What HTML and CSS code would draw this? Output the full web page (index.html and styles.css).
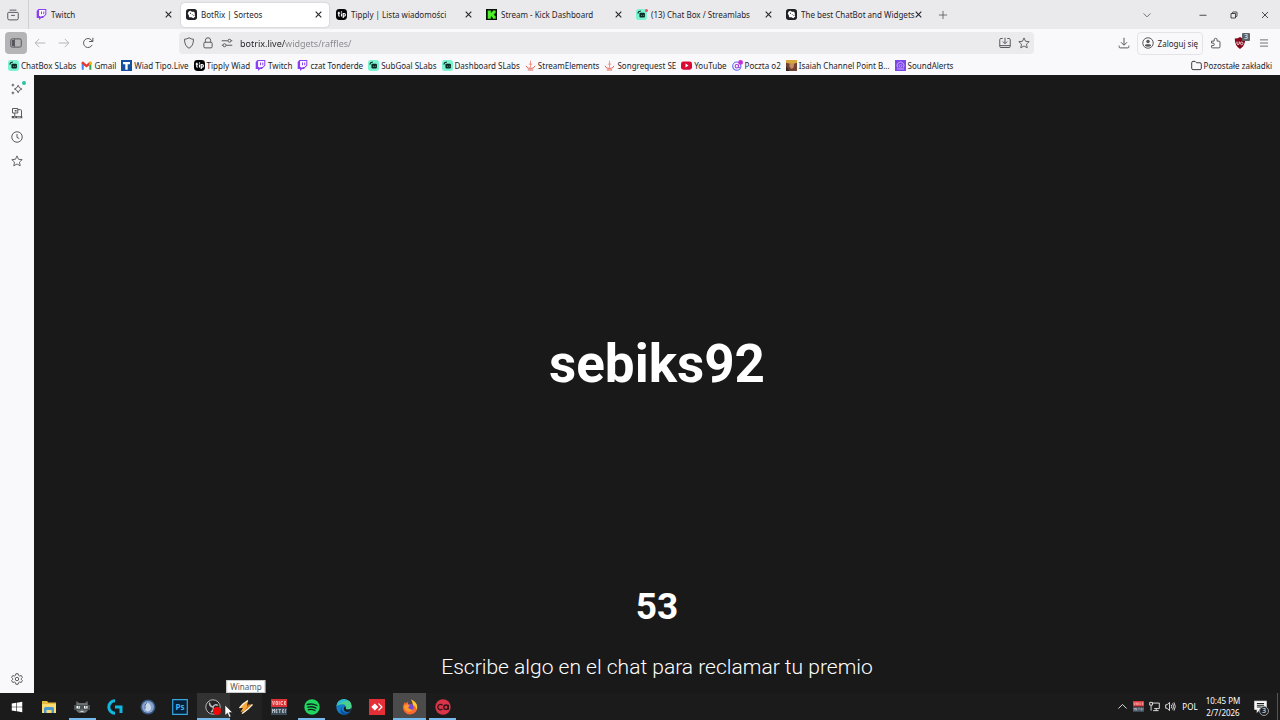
FILE: index.html
```html
<!DOCTYPE html>
<html lang="pl">
<head>
  <meta charset="UTF-8">
  <meta name="viewport" content="width=device-width, initial-scale=1">
  <title>BotRix | Sorteos</title>
  <link rel="stylesheet" href="styles.css">
</head>
<body>
<!-- shared icons -->
<svg class="sprite" aria-hidden="true">
  <symbol id="i-twitch" viewBox="0 0 16 16">
    <path d="M3.500 0 1 3v10h3.500v3l3-3H10l5-5V0z" fill="#8a3ff0"/>
    <path d="M4.500 1.500h9v6L11 10H8.500L6.500 12v-2h-2z" fill="#fff"/>
    <path d="M8 3.800v3.700M11.300 3.800v3.700" stroke="#8a3ff0" stroke-width="1.500"/>
  </symbol>
  <symbol id="i-botrix" viewBox="0 0 16 16">
    <rect width="16" height="16" rx="4" fill="#202126"/>
    <path d="M4 3.500 6.500 2.500 8.500 4h3.500l1 3.500-.5 1.500 1 2-3 2.500L8 12 4.500 12 4 9 2.500 6.500z" fill="#fff"/>
    <path d="m5.800 5.500 1.700 1.700M9.500 8l1.500 1.500" stroke="#202126" stroke-width="1.400"/>
  </symbol>
  <symbol id="i-tip" viewBox="0 0 16 16">
    <rect width="16" height="16" rx="5" fill="#050505"/>
    <path d="M4 4v5.500q0 1 1.500 1M2.500 6h3.500M8 6.500V11M10.500 13V6.500h1.200a2 2 0 0 1 0 4h-1.200" stroke="#fff" stroke-width="1.700" fill="none"/>
    <circle cx="8" cy="4.300" r="1" fill="#fff"/>
  </symbol>
  <symbol id="i-kick" viewBox="0 0 16 16">
    <path d="M0 0h16v16H0z" fill="#061006"/>
    <path d="M2.500 2H7v3h1.500V3.500H10V2h4v4h-1.500v1.500H11v1h1.500V10H14v4h-4v-1.500H8.500V11H7v3H2.500z" fill="#4cf02b"/>
  </symbol>
  <symbol id="i-slabs" viewBox="0 0 16 16">
    <rect width="16" height="16" rx="4" fill="#7cf3d0"/>
    <path d="M2.500 6.500 4 4l3-1" fill="none" stroke="#092b24" stroke-width="1.600"/>
    <path d="M5 7q0-1.500 1.500-1.500h5Q13 5.500 13 7v4q0 1.500-1.500 1.500h-5Q5 12.500 5 11z" fill="#092b24"/>
    <path d="M8 8.500v1.300M10.700 8.500v1.300" stroke="#7cf3d0"/>
  </symbol>
  <symbol id="i-gmail" viewBox="0 0 16 16">
    <path d="M1 3.500V14h3V7z" fill="#4285f4"/>
    <path d="M15 3.500V14h-3V7z" fill="#34a853"/>
    <path d="m1 3 2-1 5 4.500L13 2l2 1v2.500L8 11 1 5.500z" fill="#e5392e"/>
    <path d="M12 3.500 14 2l1 1.500v2.300L12 8z" fill="#fbbc04"/>
  </symbol>
  <symbol id="i-tipo" viewBox="0 0 16 16">
    <path d="M0 0h16v16H0z" fill="#14509d"/>
    <path d="M3 3h10v3H9.700v8H6.300V6H3z" fill="#fff"/>
  </symbol>
  <symbol id="i-se" viewBox="0 0 16 16">
    <path d="M8 1v10M5.500 6h5" stroke="#ef8c80" stroke-width="1.300"/>
    <path d="M1.500 8.500q1 3 4 3.500h5q3-.5 4-3.500M4 14.500h8" fill="none" stroke="#e5594c" stroke-width="1.400"/>
  </symbol>
  <symbol id="i-youtube" viewBox="0 0 16 16">
    <rect y="2" width="16" height="12" rx="3.500" fill="#d90a35"/>
    <path d="m6.500 5.200 4.500 2.800-4.500 2.800z" fill="#fff"/>
  </symbol>
  <symbol id="i-o2" viewBox="0 0 16 16">
    <circle cx="7" cy="9" r="6" fill="none" stroke="#5c6df0" stroke-width="1.600"/>
    <circle cx="7" cy="9" r="2.500" fill="none" stroke="#a43ce0" stroke-width="1.600"/>
    <path d="M9.500 7v3q.5 2 2.500 1" fill="none" stroke="#a43ce0" stroke-width="1.500"/>
    <circle cx="12.500" cy="3.500" r="3.500" fill="#c42fd6"/>
  </symbol>
  <symbol id="i-isaiah" viewBox="0 0 16 16">
    <path d="M0 0h16v16H0z" fill="#70422f"/>
    <path d="M0 0h16v4L9 6 0 4z" fill="#d6a740"/>
    <path d="M5 5h7l-1 6-3 2-3-4z" fill="#c48c65"/>
    <path d="M0 9 5 16H0z" fill="#2c2421"/>
  </symbol>
  <symbol id="i-alerts" viewBox="0 0 16 16">
    <path d="M0 0h16v16H0z" fill="#7c46e8"/>
    <path d="M4 11a5 5 0 1 1 8 0M3 13h10" fill="none" stroke="#cfb6ff" stroke-width="1.300"/>
    <circle cx="8" cy="8.500" r="2" fill="none" stroke="#cfb6ff"/>
  </symbol>
  <symbol id="i-close" viewBox="3 3 10 10"><path d="m4 4 8 8m0-8-8 8" fill="none" stroke="currentColor" stroke-width="1.600"/></symbol>
  <symbol id="i-star" viewBox="0 0 16 16"><path d="m8 1.200 2 4.500 4.900.5-3.600 3.300 1 4.900L8 12l-4.300 2.400 1-4.900L1.100 6.200 6 5.700z" fill="none" stroke="currentColor" stroke-width="1.200" stroke-linejoin="round"/></symbol>
  <symbol id="i-vm" viewBox="0 0 16 16">
    <path d="M0 0h16v8H0z" fill="#dd3338"/><path d="M0 8.500h16V16H0z" fill="#3b4855"/>
    <path d="m1.500 2 1 4 1-4M5 2.500h1.500v3H5zM8.200 2v4M12 2.500H10v3h2M15 2.500h-1.500v3H15M13.500 4H15" fill="none" stroke="#ffd4d2" stroke-width=".8"/>
    <path d="M1.500 14v-4l1 2 1-2v4M6.500 10.500H5v3h1.500M5 12h1.500M7.500 10.500h2.500M8.700 10.500V14M13 10.500h-1.500v3H13M11.500 12H13M14.300 14v-3.500h1" fill="none" stroke="#c6d0d8" stroke-width=".8"/>
  </symbol>
</svg>

<header class="browser">
  <!-- tab strip -->
  <div class="tabstrip">
    <button class="tab-overview" aria-label="Firefox View">
      <svg class="icon" viewBox="0 0 16 16"><path d="M3.500 1.500h9M2 4.500h12q1 0 1 1v7q0 2-2 2H3q-2 0-2-2v-7q0-1 1-1zM5.500 8.500h5" class="line"/></svg>
    </button>
    <nav class="tabs">
      <div class="tab"><svg class="fav"><use href="#i-twitch"/></svg><a href="#">Twitch</a><button aria-label="Zamknij"><svg><use href="#i-close"/></svg></button></div>
      <div class="tab active"><svg class="fav"><use href="#i-botrix"/></svg><a href="#">BotRix | Sorteos</a><button aria-label="Zamknij"><svg><use href="#i-close"/></svg></button></div>
      <div class="tab"><svg class="fav"><use href="#i-tip"/></svg><a href="#">Tipply | Lista wiadomości</a><button aria-label="Zamknij"><svg><use href="#i-close"/></svg></button></div>
      <div class="tab"><svg class="fav"><use href="#i-kick"/></svg><a href="#">Stream - Kick Dashboard</a><button aria-label="Zamknij"><svg><use href="#i-close"/></svg></button></div>
      <div class="tab notify"><svg class="fav"><use href="#i-slabs"/></svg><a href="#">(13) Chat Box / Streamlabs</a><button aria-label="Zamknij"><svg><use href="#i-close"/></svg></button></div>
      <div class="tab"><svg class="fav"><use href="#i-botrix"/></svg><a href="#">The best ChatBot and Widgets</a><button aria-label="Zamknij"><svg><use href="#i-close"/></svg></button></div>
    </nav>
    <button class="new-tab" aria-label="Nowa karta"><svg class="icon small" viewBox="0 0 16 16"><path d="M8 1.500v13M1.500 8h13" class="line"/></svg></button>
    <button class="all-tabs" aria-label="Lista kart"><svg class="icon small" viewBox="0 0 16 16"><path d="m2.500 5.500 5.500 5.500 5.500-5.500" class="line"/></svg></button>
    <div class="window-buttons">
      <button aria-label="Minimalizuj"><svg viewBox="0 0 16 16"><path d="M1 8.500h14"/></svg></button>
      <button aria-label="Przywróć"><svg viewBox="0 0 16 16"><path d="M2 5h9v9H2zM5 5V3q0-1 1-1h7q1 0 1 1v7q0 1-1 1h-2"/></svg></button>
      <button aria-label="Zamknij okno"><svg viewBox="0 0 16 16"><path d="m2 2 12 12m0-12L2 14"/></svg></button>
    </div>
  </div>

  <!-- address bar -->
  <div class="toolbar">
    <button class="sidebar-toggle" aria-label="Panel boczny"><svg class="icon" viewBox="0 0 16 16"><rect x="1" y="2.500" width="14" height="11" rx="2" class="line"/><path d="M2.500 4h3v8h-3z" fill="currentColor"/><path d="M6 3v10" class="line"/></svg></button>
    <button class="tool dim" aria-label="Wstecz"><svg class="icon" viewBox="0 0 16 16"><path d="M15 8H1.500M7 2.500 1.500 8 7 13.500" class="line"/></svg></button>
    <button class="tool dim" aria-label="Naprzód"><svg class="icon" viewBox="0 0 16 16"><path d="M1 8h13.500M9 2.500 14.500 8 9 13.500" class="line"/></svg></button>
    <button class="tool" aria-label="Odśwież"><svg class="icon" viewBox="0 0 16 16"><path d="M13.500 10.500A6 6 0 1 1 12.500 4l1.500 1.500M14.500 1v5h-5" class="line"/></svg></button>
    <div class="urlbar">
      <svg class="icon" viewBox="0 0 16 16"><path d="M8 1q3 2 6 2 0 9-6 12Q2 12 2 3q3 0 6-2z" class="line"/></svg>
      <svg class="icon" viewBox="0 0 16 16"><path d="M4.500 7V4.500a3.500 3.500 0 0 1 7 0V7M4 7h8q1.500 0 1.500 1.500V13q0 1.500-1.500 1.500H4Q2.500 14.500 2.500 13V8.500Q2.500 7 4 7z" class="line"/></svg>
      <svg class="icon" viewBox="0 0 16 16"><path d="M1 5h8M7 11h8M1 11h1.500M13.500 5H15" class="line"/><circle cx="11.300" cy="5" r="2" class="line"/><circle cx="4.700" cy="11" r="2" class="line"/></svg>
      <input class="url" type="text" aria-label="Adres" value="botrix.live/widgets/raffles/">
      <button aria-label="Zainstaluj"><svg class="icon" viewBox="0 0 16 16"><path d="M5 2H2.500Q1 2 1 3.500v9Q1 14 2.500 14h11q1.500 0 1.500-1.500v-9Q15 2 13.500 2H11M1 11.500h14M8 1v7.500M5 6l3 3 3-3" class="line"/></svg></button>
      <button aria-label="Dodaj zakładkę"><svg class="icon"><use href="#i-star"/></svg></button>
    </div>
    <button class="tool" aria-label="Pobrane"><svg class="icon" viewBox="0 0 16 16"><path d="M8 1v9.500M4 7l4 4 4-4M1.500 11.500V13q0 1.500 1.500 1.500h10q1.500 0 1.500-1.500v-1.500" class="line"/></svg></button>
    <button class="login"><svg class="icon" viewBox="0 0 16 16"><circle cx="8" cy="8" r="7" class="line"/><circle cx="8" cy="6" r="2.300" fill="currentColor"/><path d="M3.800 11.500q0-2 2-2h4.400q2 0 2 2Q10.500 13 8 13t-4.200-1.500z" fill="currentColor"/></svg>Zaloguj się</button>
    <button class="tool ext" aria-label="Rozszerzenia"><svg class="icon" viewBox="0 0 16 16"><path d="M2 5.500h3.500V3.800a2 2 0 0 1 4 0v1.700H12q1.300 0 1.300 1.300v6.400q0 1.300-1.300 1.300H3.300Q2 14.500 2 13.200v-1.700h2a1.700 1.700 0 0 0 0-3.400H2z" class="line"/></svg></button>
    <button class="tool ublock" aria-label="uBlock Origin"><svg class="icon" viewBox="0 0 16 16"><path d="M8 0q3 2 7 2 0 10-7 14Q1 12 1 2q4 0 7-2z" fill="#850719"/><path d="M4 6v2.500q0 1.500 1.500 1.500T7 8.500V6M12 8.500a1.800 1.800 0 1 0 0 .1" fill="none" stroke="#fff" stroke-width="1.200"/></svg><span class="count">3</span></button>
    <button class="tool menu" aria-label="Menu"><svg class="icon small" viewBox="0 0 16 16"><path d="M1.500 3h13M1.500 8h13M1.500 13h13" class="line"/></svg></button>
  </div>

  <!-- bookmarks -->
  <nav class="bookmarks">
    <a href="#"><svg><use href="#i-slabs"/></svg>ChatBox SLabs</a>
    <a href="#"><svg><use href="#i-gmail"/></svg>Gmail</a>
    <a href="#"><svg><use href="#i-tipo"/></svg>Wiad Tipo.Live</a>
    <a href="#"><svg><use href="#i-tip"/></svg>Tipply Wiad</a>
    <a href="#"><svg><use href="#i-twitch"/></svg>Twitch</a>
    <a href="#"><svg><use href="#i-twitch"/></svg>czat Tonderde</a>
    <a href="#"><svg><use href="#i-slabs"/></svg>SubGoal SLabs</a>
    <a href="#"><svg><use href="#i-slabs"/></svg>Dashboard SLabs</a>
    <a href="#"><svg><use href="#i-se"/></svg>StreamElements</a>
    <a href="#"><svg><use href="#i-se"/></svg>Songrequest SE</a>
    <a href="#"><svg><use href="#i-youtube"/></svg>YouTube</a>
    <a href="#"><svg><use href="#i-o2"/></svg>Poczta o2</a>
    <a href="#"><svg><use href="#i-isaiah"/></svg>Isaiah Channel Point B...</a>
    <a href="#"><svg><use href="#i-alerts"/></svg>SoundAlerts</a>
    <a href="#" class="other"><svg viewBox="0 0 16 16"><path d="M1 4q0-2 2-2h3l2 2h5q2 0 2 2v6q0 2-2 2H3q-2 0-2-2z" class="line"/></svg>Pozostałe zakładki</a>
  </nav>
</header>

<div class="workspace">
  <aside class="sidebar">
    <button class="ai" aria-label="Chatbot AI"><svg class="icon" viewBox="0 0 16 16"><path d="M9.500 3q.8 3.800 5 5-4.200 1.200-5 5-.8-3.800-5-5 4.200-1.200 5-5z" class="line"/><path d="M2.500 1v3.500M.8 2.700h3.500M2.500 11.500V15M.8 13.200h3.500" class="line"/></svg></button>
    <button aria-label="Karty z innych urządzeń"><svg class="icon" viewBox="0 0 16 16"><path d="M2 2h7v6H2zM9 3.500h3.500q1.500 0 1.500 1.500v7M5 8v4" class="line"/><path d="M5 4h2.500v2H5zM1 12h14v3H1z" fill="currentColor"/><path d="M4 13.500h2M8 13.500h5" stroke="#f9f9fb"/></svg></button>
    <button aria-label="Historia"><svg class="icon" viewBox="0 0 16 16"><circle cx="8" cy="8" r="7" class="line"/><path d="M8 4v4.500l3 1.500" class="line"/></svg></button>
    <button aria-label="Zakładki"><svg class="icon"><use href="#i-star"/></svg></button>
    <button class="settings" aria-label="Ustawienia"><svg class="icon" viewBox="0 0 16 16"><path d="m6.500 1h3l.6 2.200 1.400.8 2.200-.6 1.500 2.600L13.600 7.600v.8l1.600 1.600-1.500 2.600-2.200-.6-1.400.8-.6 2.200h-3l-.6-2.200-1.400-.8-2.200.6L.8 10l1.600-1.600v-.8L.8 6l1.500-2.600 2.200.6 1.400-.8z" class="line"/><circle cx="8" cy="8" r="2.300" class="line"/></svg></button>
  </aside>
  <main class="raffle">
    <h1 class="winner">sebiks92</h1>
    <p class="countdown">53</p>
    <p class="message">Escribe algo en el chat para reclamar tu premio</p>
  </main>
</div>

<footer class="taskbar">
  <button class="start" aria-label="Start"><svg viewBox="0 0 16 16"><path d="M1 3.200 7 2.300v5.300H1zM7.800 2.200 15 1v6.600H7.800zM1 8.400h6v5.300l-6-.9zM7.800 8.400H15V15l-7.200-1.200z" fill="#fff"/></svg></button>
  <div class="apps">
    <button aria-label="Eksplorator plików"><svg viewBox="0 0 16 16"><path d="M1 2h5l1.500 1.500H15V14H1z" fill="#e7b93c"/><path d="M1 5h14v9H1z" fill="#fbdc72"/><path d="M3 14V9.500Q3 8 4.500 8h7Q13 8 13 9.500V14h-2.500v-3h-5v3z" fill="#4b98cf"/></svg></button>
    <button class="running" aria-label="Chatterino"><svg viewBox="0 0 16 16"><path d="M2.500 2 5 4h6l2.500-2 .5 5-.5 5-2.500 2H5l-2.500-2L2 7z" fill="#697174"/><path d="M0 6h16v5H9.500L8 9.500 6.500 11H0z" fill="#4a5153"/><path d="M2.500 7h3.500v2.500H2.500zM10 7h3.500v2.500H10z" fill="#fff"/><path d="M4 8h1.500M11 8h1.500" stroke="#333"/><path d="M6.500 12.500h3" stroke="#d5dadb"/></svg></button>
    <button aria-label="Logitech G HUB"><svg viewBox="0 0 16 16"><path d="M8 1.800A6.200 6.200 0 1 0 8 14.200" fill="none" stroke="#10b7de" stroke-width="3"/><path d="M8 6.500h7.500V14h-3V9.500H8z" fill="#10b7de"/></svg></button>
    <button aria-label="Cebula"><svg viewBox="0 0 16 16"><circle cx="8" cy="8" r="7.500" fill="#375680"/><circle cx="8" cy="8" r="6" fill="#86a3ce"/><path d="M6 2.500q4 2 5 5 .5 4-3 5-4-1-3.500-5 .5-2 1.500-5z" fill="#c9d8ec"/><path d="M7 3q-3 3-2 7" stroke="#456595" fill="none"/></svg></button>
    <button aria-label="Photoshop"><svg viewBox="0 0 16 16"><path d="M.7.7h14.600v14.600H.7z" fill="#07213a" stroke="#36a7df" stroke-width="1.200"/><text x="8" y="11" class="ps">Ps</text></svg></button>
    <button class="running hover" aria-label="OBS Studio"><svg viewBox="0 0 16 16"><circle cx="8" cy="8" r="7.200" fill="#252527" stroke="#b8b8b8"/><path d="M8 8Q4.500 7.500 4.500 3.500M8 8q1.500 3-2 5M8 8q2-3.500 5-1.500" fill="none" stroke="#bdbdbd" stroke-width="1.500"/><circle cx="12" cy="12" r="4" fill="#f00808"/></svg>
      <svg class="pointer" viewBox="0 0 9 14"><path d="M1 1v10.500l2.500-2.300 1.700 4 1.800-.8-1.700-3.800H8.500z" fill="#fff" stroke="#222" stroke-width=".6"/></svg></button>
    <button class="hint" aria-label="Winamp"><svg viewBox="0 0 16 16"><path d="M10 1.500 5 5 1.500 9H5L2.500 13l4-1 6-5H9z" fill="#f7a93c"/><path d="m11.500 2.500-1.500 3h4.500L6 14l-2.500 1L8 9.500z" fill="#cf7a22"/><path d="M10 1.500 5 5 1.500 9M14.500 5.500 10 10l-6 4.500" fill="none" stroke="#fff1d4" stroke-width="1.300"/></svg><span class="tooltip">Winamp</span></button>
    <button aria-label="Voicemeeter"><svg><use href="#i-vm"/></svg></button>
    <button class="running" aria-label="Spotify"><svg viewBox="0 0 16 16"><circle cx="8" cy="8" r="7.700" fill="#20d760"/><path d="M3.300 5.500q5-1.500 9.700 1M4 8.200q4-1.200 8 .9M4.500 10.700q3.500-.9 6.500.8" fill="none" stroke="#10251a" stroke-width="1.400" stroke-linecap="round"/></svg></button>
    <button aria-label="Edge"><svg viewBox="0 0 16 16"><circle cx="8" cy="8" r="7.700" fill="#167cc7"/><path d="M.5 7Q1.500.3 8 .3q7.500.5 7.700 7-.5 3.500-4.500 3.200-2-.5-1-2Q10 5.500 7 5.200 3 5 .5 7z" fill="#4bd08c"/><path d="M.5 7Q2 .5 8 .3q3 0 5 2-5-1-8 1.700Q2 5 .5 7z" fill="#29b9d8"/><path d="M6 7q-2 4 2.500 6.500 3 .5 5.500-1-2 3.200-6 3.200Q2 14 6 7z" fill="#0c4f9a"/><path d="M10 8.300q-1 1.700 1.300 2.300 2.500.2 4-1.400-.4 2-1.500 3.300-3 1-5.300-.5Q7 10 8.500 7.500z" fill="#1c1c1c"/></svg></button>
    <button aria-label="AnyDesk"><svg viewBox="0 0 16 16"><path d="M0 0h16v16H0z" fill="#e52f37"/><path d="m5.800 4.500 3.500 3.500-3.500 3.500L2.300 8zM9 4.800l1-.6L13.800 8 10 11.800l-1-.7L12 8z" fill="#fff"/></svg></button>
    <button class="running current" aria-label="Firefox"><svg viewBox="0 0 16 16"><path d="M8 15.500A7 7 0 0 1 1 8q0-3 2.200-5l.3 1.700Q4.500 3.200 6.200 3L6 5l5 1Q11 3 9 .5q5 2 6 6 1.200 8-7 9z" fill="#ff672d"/><path d="M9 .5q5 2 6 6 .5 2.500-.5 4.500-.5-4-3.500-5Q11 3 9 .5z" fill="#ffc935"/><circle cx="8" cy="8.500" r="3.600" fill="#7549d8"/><path d="M2 7q1-2 4-1.500L8 7 6 8q1 3 5 2.500-2 3-5.500 2Q2 11 2 7z" fill="#ff9b26"/></svg></button>
    <button class="running" aria-label="Creative Cloud"><svg viewBox="0 0 16 16"><circle cx="8" cy="8" r="7.700" fill="#d93548"/><path d="M7.500 6.300a2.700 2.700 0 1 0 0 3.600" fill="none" stroke="#32131a" stroke-width="1.300"/><circle cx="11" cy="8.200" r="2.200" fill="none" stroke="#32131a" stroke-width="1.300"/><path d="M13.300 5.700v5" stroke="#32131a" stroke-width="1.300"/></svg></button>
  </div>
  <div class="tray">
    <button aria-label="Ukryte ikony"><svg viewBox="0 0 16 16"><path d="m2 11 6-6 6 6"/></svg></button>
    <button aria-label="Voicemeeter"><svg class="solid"><use href="#i-vm"/></svg></button>
    <button aria-label="Sieć"><svg viewBox="0 0 16 16"><path d="M5 3h10v8H7.500M6 14h8M10.500 11v3M1 2h4v4H1zM3 6v8"/></svg></button>
    <button aria-label="Głośność"><svg viewBox="0 0 16 16"><path d="M1 5.500h2L6.500 2v12L3 10.500H1zM9 5.500q1.500 2.500 0 5M11 3.500q3 4.500 0 9M13 2q4 6 0 12"/></svg></button>
    <button class="lang">POL</button>
    <button class="clock"><time datetime="2026-02-07T22:45">10:45 PM<br>2/7/2026</time></button>
    <button class="notifications" aria-label="Powiadomienia"><svg viewBox="0 0 16 16"><path d="M1 1.500h14v10H7l-3 3v-3H1z" fill="#fff"/><path d="M3.500 4.300h9M3.500 6.500h9M3.500 8.700h6" class="rows"/></svg><span class="badge">3</span></button>
  </div>
</footer>
</body>
</html>
```
FILE: styles.css
```css
* {
  box-sizing: border-box;
}
body {
  margin: 0;
  height: 100vh;
  display: flex;
  flex-direction: column;
  overflow: hidden;
  background: #191919;
  color: #25252b;
  font-family: "Noto Sans", "Open Sans", sans-serif;
  font-size: 8px;
}
button, input {
  margin: 0;
  padding: 0;
  border: 0;
  background: none;
  color: inherit;
  font: inherit;
}
button {
  display: flex;
  align-items: center;
  justify-content: center;
}
a {
  color: inherit;
  text-decoration: none;
}
svg {
  flex: none;
}
.sprite {
  display: none;
}
.icon {
  width: 12px;
  height: 12px;
  color: #55555b;
}
.icon.small {
  width: 10px;
  height: 10px;
}
.line {
  fill: none;
  stroke: currentColor;
  stroke-width: 1.3;
}
.browser {
  flex: none;
  background: #f9f9fb;
}

/* tabs */
.tabstrip {
  display: flex;
  height: 29px;
  background: #eaeaed;
}
.tab-overview {
  width: 29px;
  padding-right: 2px;
  border-right: 1px solid #cfcfd4;
}
.tabs {
  display: flex;
  align-items: center;
  gap: 2px;
  padding-left: 2px;
}
.tab {
  position: relative;
  display: flex;
  align-items: center;
  width: 148px;
  height: 24px;
  padding: 0 7px 0 5px;
  border-radius: 4px;
}
.tab.active {
  background: #fff;
  box-shadow: 0 0 2px #b5b5ba;
}
.tab .fav {
  width: 11px;
  height: 11px;
  margin-right: 4px;
}
.tab a {
  flex: 1;
  overflow: hidden;
  white-space: nowrap;
}
.tab button svg {
  width: 7px;
  height: 7px;
}
.tab.notify::after {
  content: "";
  position: absolute;
  left: 14px;
  top: 6px;
  width: 3px;
  height: 3px;
  border-radius: 50%;
  background: #e8506a;
}
.new-tab {
  width: 28px;
}
.all-tabs {
  width: 24px;
  margin-left: auto;
  margin-right: 28px;
}
.window-buttons {
  display: flex;
}
.window-buttons button {
  width: 31px;
}
.window-buttons svg {
  width: 8px;
  height: 8px;
  fill: none;
  stroke: #222;
  stroke-width: 1.6;
}

/* toolbar */
.toolbar {
  display: flex;
  align-items: center;
  height: 28px;
  padding: 0 4px 0 5px;
}
.sidebar-toggle {
  width: 22px;
  height: 22px;
  margin-right: 1px;
  border-radius: 4px;
  background: #b5b5b8;
}
.tool {
  width: 24px;
  height: 24px;
}
.dim .icon {
  color: #b4b4b9;
}
.urlbar {
  flex: 1;
  display: flex;
  align-items: center;
  gap: 7px;
  height: 22px;
  margin: 0 78px 0 79px;
  padding: 0 4px;
  border-radius: 4px;
  background: #ebebee;
}
/* domain is darker than the path */
.url {
  flex: 1;
  min-width: 0;
  font-size: 9px;
  color: transparent;
  background: linear-gradient(to right, #202026 45px, #85858c 45px);
  -webkit-background-clip: text;
  background-clip: text;
}
.login {
  gap: 4px;
  height: 23px;
  margin: 0 1px;
  padding: 0 4px;
  border: 1px solid #e4e4e8;
  border-radius: 4px;
}
.ublock {
  position: relative;
}
.count {
  position: absolute;
  top: 2px;
  right: 2px;
  padding: 0 2px;
  border-radius: 1px;
  background: #5d6266;
  color: #fff;
  font-size: 7px;
  line-height: 8px;
}

/* bookmarks */
.bookmarks {
  display: flex;
  align-items: center;
  gap: 5px;
  height: 18px;
  padding: 0 8px 2px;
  white-space: nowrap;
}
.bookmarks a {
  display: flex;
  align-items: center;
  gap: 2px;
}
.bookmarks svg {
  width: 11px;
  height: 11px;
}
.bookmarks .other {
  margin-left: auto;
}

/* page */
.workspace {
  flex: 1;
  min-height: 0;
  display: flex;
}
.sidebar {
  display: flex;
  flex-direction: column;
  width: 34px;
  padding: 2px 0;
  background: #f9f9fb;
}
.sidebar button {
  height: 24px;
}
.sidebar .settings {
  margin-top: auto;
}
.ai {
  position: relative;
}
.ai::after {
  content: "";
  position: absolute;
  top: 4px;
  right: 8px;
  width: 4px;
  height: 4px;
  border-radius: 50%;
  background: #2ac3a2;
}
.raffle {
  flex: 1;
  display: flex;
  flex-direction: column;
  align-items: center;
  padding: 68px 0 11px;
  background: #191919;
  color: #fff;
  font-family: Roboto, sans-serif;
}
.winner {
  flex: 1;
  display: flex;
  align-items: center;
  margin: 0;
  font-size: 53px;
  font-weight: 700;
}
.countdown {
  margin: 0 0 23px;
  font-size: 37px;
  font-weight: 700;
  line-height: 44px;
}
.message {
  margin: 0;
  font-size: 21px;
  font-weight: 300;
  line-height: 30px;
}

/* taskbar */
.taskbar {
  flex: none;
  display: flex;
  height: 27px;
  background: #1b1b1b;
  color: #fff;
}
.start {
  width: 33px;
}
.start svg {
  width: 12px;
  height: 12px;
}
.apps {
  display: grid;
  grid-template-columns: repeat(13, 1fr);
  width: 426px;
}
.apps button {
  position: relative;
}
.apps svg {
  width: 16px;
  height: 16px;
}
.running::after {
  content: "";
  position: absolute;
  left: 3px;
  right: 3px;
  bottom: 0;
  height: 2px;
  background: #76b9ed;
}
.apps .hover {
  background: #323232;
}
.apps .hint {
  background: #222;
}
.apps .current {
  background: #4b4b4b;
}
.current::after, .hover::after {
  left: 0;
  right: 0;
}
.ps {
  fill: #42b6ee;
  font-size: 8px;
  font-weight: 700;
  text-anchor: middle;
}
.apps .pointer {
  position: absolute;
  z-index: 2;
  top: 11px;
  left: 27px;
  width: 9px;
  height: 14px;
}
.tooltip {
  position: absolute;
  bottom: 100%;
  left: 50%;
  transform: translateX(-50%);
  padding: 0 3px;
  border: 1px solid #ccc;
  background: #fff;
  color: #575757;
  line-height: 11px;
}
.tray {
  display: flex;
  margin-left: auto;
  padding-right: 2px;
}
.tray button {
  width: 16px;
}
.tray svg {
  width: 11px;
  height: 11px;
  fill: none;
  stroke: #eee;
  stroke-width: 1.3;
}
.tray .solid {
  stroke: none;
}
.tray .lang {
  width: 24px;
}
.tray .clock {
  width: 42px;
  line-height: 12px;
  text-align: center;
}
.tray .notifications {
  position: relative;
  width: 34px;
  border-right: 1px solid #555;
}
.notifications svg {
  width: 13px;
  height: 13px;
}
.tray .rows {
  stroke: #1b1b1b;
}
.badge {
  position: absolute;
  right: 8px;
  bottom: 4px;
  width: 10px;
  height: 10px;
  border: 1px solid #999;
  border-radius: 50%;
  background: #222;
  font-size: 7px;
  line-height: 8px;
}
```
